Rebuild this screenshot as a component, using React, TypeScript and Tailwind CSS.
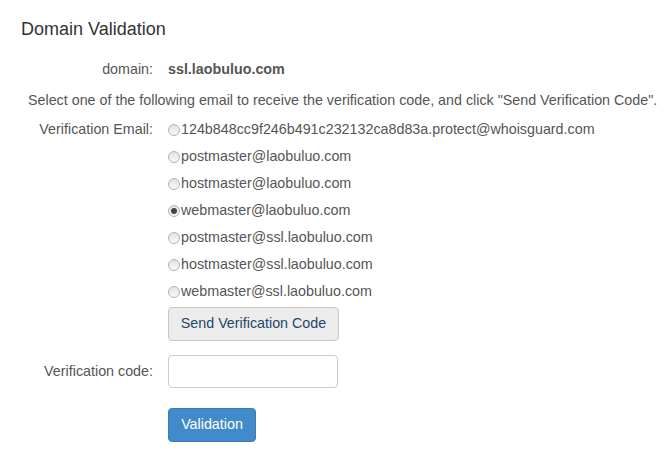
const emails = [
  "124b848cc9f246b491c232132ca8d83a.protect@whoisguard.com",
  "postmaster@laobuluo.com",
  "hostmaster@laobuluo.com",
  "webmaster@laobuluo.com",
  "postmaster@ssl.laobuluo.com",
  "hostmaster@ssl.laobuluo.com",
  "webmaster@ssl.laobuluo.com",
];

function Radio({ checked }: { checked: boolean }) {
  return (
    <span className="w-[12px] h-[12px] rounded-full border border-[#b4b4b4] bg-gradient-to-b from-[#e2e2e2] to-[#f9f9f9] flex items-center justify-center mr-[1px] shrink-0">
      {checked && <span className="w-[6px] h-[6px] rounded-full bg-[#444]" />}
    </span>
  );
}

export default function App() {
  return (
    <div
      className="w-[667px] h-[457px] bg-white text-[#555] text-[14.3px] overflow-hidden"
      style={{ fontFamily: '"Liberation Sans", Arial, sans-serif' }}
    >
      <h2 className="text-[18px] text-[#333] pl-[21px] pt-[19px] leading-[20px]">Domain Validation</h2>

      <div className="flex items-center mt-[21px] h-[20px]">
        <div className="w-[168px] pr-[15px] text-right">domain:</div>
        <div className="font-bold">ssl.laobuluo.com</div>
      </div>

      <div className="pl-[28px] mt-[10px] h-[20px] leading-[20px]">
        Select one of the following email to receive the verification code, and click "Send Verification Code".
      </div>

      <div className="flex mt-[6px]">
        <div className="w-[168px] pr-[15px] text-right h-[27px] leading-[27px]">Verification Email:</div>
        <div className="flex flex-col">
          {emails.map((e, i) => (
            <label key={e} className="flex items-center h-[27px]">
              <Radio checked={i === 3} />
              <span>{e}</span>
            </label>
          ))}
          <button className="mt-[2px] w-[171px] h-[34px] border border-[#c8c8c8] rounded-[4px] bg-[#ececec] text-[#24476b]">
            Send Verification Code
          </button>
        </div>
      </div>

      <div className="flex items-center mt-[14px]">
        <div className="w-[168px] pr-[15px] text-right">Verification code:</div>
        <input className="w-[170px] h-[33px] border border-[#ccc] rounded-[4px] outline-none px-2" />
      </div>

      <div className="pl-[168px] mt-[20px]">
        <button className="w-[88px] h-[34px] rounded-[4px] bg-[#428bca] border border-[#3a7ab8] text-white">
          Validation
        </button>
      </div>
    </div>
  );
}
